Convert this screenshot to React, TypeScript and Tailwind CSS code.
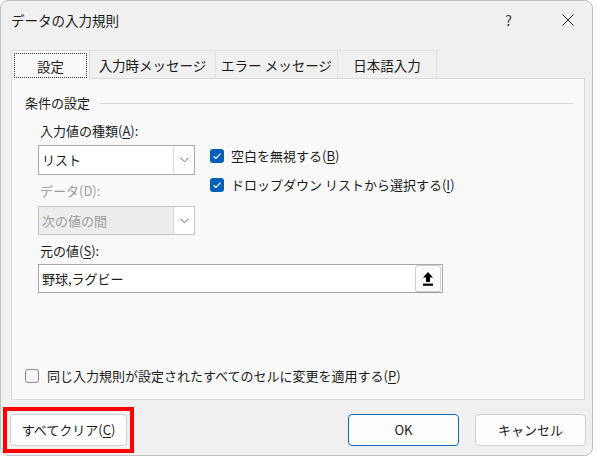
import React from "react";

const Chevron = () => (
  <svg width="9" height="6" viewBox="0 0 9 6" fill="none">
    <path d="M0.5 0.8 L4.5 4.8 L8.5 0.8" stroke="#6a6a6a" strokeWidth="1" />
  </svg>
);

const Check = () => (
  <div className="w-[14px] h-[14px] rounded-[3px] bg-[#005fb8] flex items-center justify-center shrink-0">
    <svg width="10" height="8" viewBox="0 0 10 8" fill="none">
      <path d="M1.5 4.2 L3.9 6.4 L8.5 1.6" stroke="#ffffff" strokeWidth="1.2" />
    </svg>
  </div>
);

const U = ({ children }: { children: React.ReactNode }) => (
  <span className="underline underline-offset-[2px] decoration-[1px]">{children}</span>
);

export default function App() {
  return (
    <div className="w-[597px] h-[458px] bg-white overflow-hidden font-['Noto_Sans_CJK_JP','Noto_Sans',sans-serif] text-[13px] text-[#1b1b1b]">
      <div className="w-[593px] h-[456px] rounded-[8px] border border-[#c2c2c2] bg-[#f0f0f0] flex flex-col">
        {/* title bar */}
        <div className="h-[38px] flex items-center pl-[10px] pr-[18px] leading-[20px]">
          <span className="text-[13.5px]">データの入力規則</span>
          <span className="ml-auto mr-[50px] text-[14px] text-[#333]">?</span>
          <svg width="12" height="12" viewBox="0 0 12 12" fill="none">
            <path d="M0.5 0.5 L11.5 11.5 M11.5 0.5 L0.5 11.5" stroke="#222" strokeWidth="1" />
          </svg>
        </div>

        {/* tabs */}
        <div className="mt-[11px] h-[28px] pl-[10px] flex items-end leading-[20px] relative z-10 text-[13.5px]">
          <div className="w-[79px] h-[29px] -mb-[1px] bg-[#f9f9f9] border border-b-0 border-[#dadada] flex items-start pt-[2px] px-[2px]">
            <div className="w-full h-[25px] border border-dotted border-[#333] flex items-center justify-center">
              設定
            </div>
          </div>
          <div className="w-[126px] h-[28px] border border-b-0 border-l-0 border-[#e2e2e2] flex items-center justify-center">
            入力時メッセージ
          </div>
          <div className="w-[122px] h-[28px] border border-b-0 border-l-0 border-[#e2e2e2] flex items-center justify-center">
            エラー メッセージ
          </div>
          <div className="w-[99px] h-[28px] border border-b-0 border-l-0 border-[#e2e2e2] flex items-center justify-center">
            日本語入力
          </div>
        </div>

        {/* panel */}
        <div className="ml-[10px] w-[574px] h-[322px] border border-[#dadada] bg-[#f9f9f9] flex flex-col px-[13px] pt-[14px] pb-[13px] leading-[20px]">
          <div className="h-[20px] flex items-center">
            <span>条件の設定</span>
            <div className="flex-1 h-px bg-[#d6d6d6] ml-[10px] -mr-[2px]" />
          </div>

          <div className="pl-[13px] flex flex-col">
            <div className="flex">
              {/* left column */}
              <div className="w-[157px] flex flex-col">
                <div className="mt-[8px] h-[20px] pl-[2px]">
                  入力値の種類(<U>A</U>):
                </div>
                <div className="mt-[4px] h-[30px] border border-[#a8a8a8] bg-white flex items-center">
                  <span className="flex-1 pl-[3px]">リスト</span>
                  <div className="w-[21px] h-full border-l border-[#dcdcdc] bg-white flex items-center justify-center">
                    <Chevron />
                  </div>
                </div>
                <div className="mt-[6px] h-[20px] pl-[2px] text-[#9c9c9c]">データ(D):</div>
                <div className="mt-[5px] h-[29px] border border-[#c4c4c4] bg-[#ededed] flex items-center">
                  <span className="flex-1 pl-[3px] text-[#9c9c9c]">次の値の間</span>
                  <div className="w-[21px] h-full border-l border-[#dcdcdc] bg-white flex items-center justify-center">
                    <Chevron />
                  </div>
                </div>
              </div>

              {/* right column */}
              <div className="ml-[15px] flex flex-col">
                <div className="mt-[33px] h-[20px] flex items-center gap-[7px]">
                  <Check />
                  <span>
                    空白を無視する(<U>B</U>)
                  </span>
                </div>
                <div className="mt-[9px] h-[20px] flex items-center gap-[7px]">
                  <Check />
                  <span>
                    ドロップダウン リストから選択する(<U>I</U>)
                  </span>
                </div>
              </div>
            </div>

            <div className="mt-[6px] h-[20px] pl-[2px]">
              元の値(<U>S</U>):
            </div>
            <div className="mt-[3px] w-[405px] h-[29px] border border-[#a8a8a8] bg-white flex items-center">
              <span className="flex-1 pl-[3px]">野球,ラグビー</span>
              <div className="w-[26px] h-[27px] mr-px border border-[#cfcfcf] rounded-[3px] bg-[#fbfbfb] shadow-[0_1px_1px_rgba(0,0,0,0.08)] flex items-center justify-center">
                <svg width="10" height="14" viewBox="0 0 10 14">
                  <polygon points="5,0 10,5.5 7,5.5 7,10 3,10 3,5.5 0,5.5" fill="#000" />
                  <rect x="0" y="11.6" width="10" height="2.2" fill="#000" />
                </svg>
              </div>
            </div>
          </div>

          <div className="flex-1" />
          <div className="h-[20px] flex items-center gap-[8px]">
            <div className="w-[14px] h-[14px] rounded-[3px] border border-[#8a8a8a] bg-[#f6f6f6]" />
            <span>
              同じ入力規則が設定されたすべてのセルに変更を適用する(<U>P</U>)
            </span>
          </div>
        </div>

        {/* buttons */}
        <div className="mt-[7px] pl-[2px] pr-[6px] flex items-start">
          <div className="w-[131px] h-[46px] border-4 border-[#ff0000] p-[3px]">
            <div className="w-full h-full rounded-[4px] border border-[#d0d0d0] bg-[#fdfdfd] flex items-center justify-center leading-[20px]">
              すべてクリア(<U>C</U>)
            </div>
          </div>
          <div className="ml-auto mt-[7px] flex gap-[16px] leading-[20px]">
            <div className="w-[111px] h-[32px] rounded-[4px] border border-[#0f6cbd] bg-[#fdfdfd] flex items-center justify-center">
              OK
            </div>
            <div className="w-[111px] h-[32px] rounded-[4px] border border-[#d0d0d0] bg-[#fdfdfd] flex items-center justify-center">
              キャンセル
            </div>
          </div>
        </div>
      </div>
    </div>
  );
}
